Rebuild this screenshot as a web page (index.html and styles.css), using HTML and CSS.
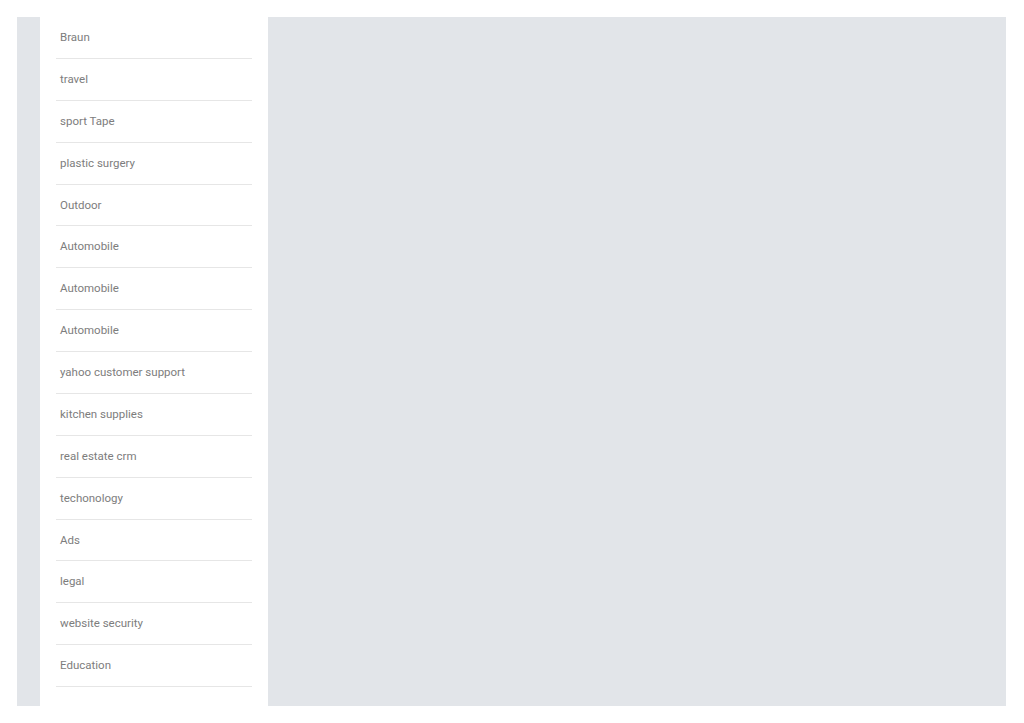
FILE: index.html
```html
<!DOCTYPE html>
<html lang="en">
<head>
  <meta charset="UTF-8">
  <meta name="viewport" content="width=device-width, initial-scale=1.0">
  <title>Categories</title>
  <link rel="stylesheet" href="styles.css">
</head>
<body>
  <div class="wrap">
    <aside class="sidebar">
      <ul class="cats">
        <li>Braun</li>
        <li>travel</li>
        <li>sport Tape</li>
        <li>plastic surgery</li>
        <li>Outdoor</li>
        <li>Automobile</li>
        <li>Automobile</li>
        <li>Automobile</li>
        <li>yahoo customer support</li>
        <li>kitchen supplies</li>
        <li>real estate crm</li>
        <li>techonology</li>
        <li>Ads</li>
        <li>legal</li>
        <li>website security</li>
        <li>Education</li>
      </ul>
    </aside>
    <main class="content"></main>
  </div>
</body>
</html>
```

FILE: styles.css
```css
* {
  margin: 0;
  padding: 0;
  box-sizing: border-box;
}

body {
  background-color: #fff;
  font-family: Roboto, 'Liberation Sans', sans-serif;
}

.wrap {
  display: flex;
  margin: 17px 18px 17px 17px;
  height: 689px;
  padding-left: 23px;
  background-color: #e2e5e9;
}

.sidebar {
  width: 228px;
  background-color: #fff;
  padding: 0 16px;
}

.cats {
  list-style: none;
}

.cats li {
  padding: 10px 4px;
  line-height: 20.87px;
  font-size: 11.5px;
  color: #7d7d7d;
  border-bottom: 1px solid #e6e6e6;
}

.content {
  flex: 1;
}
```
